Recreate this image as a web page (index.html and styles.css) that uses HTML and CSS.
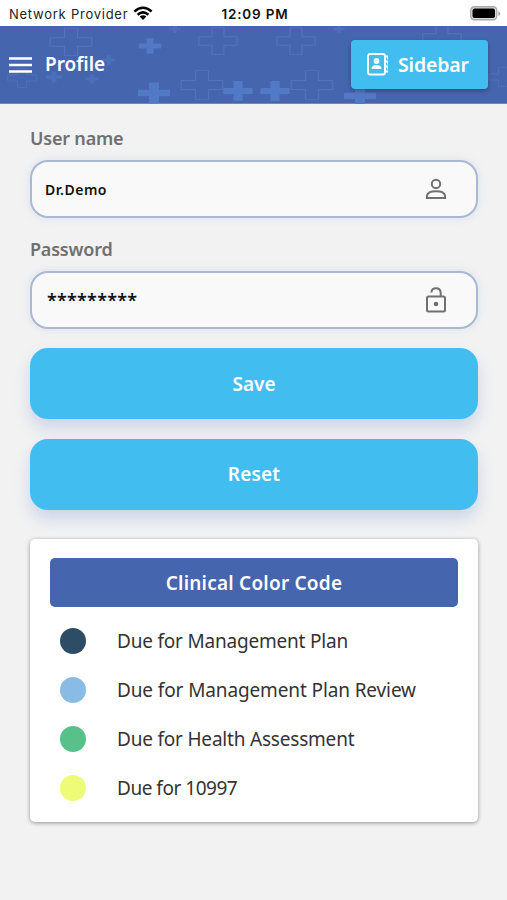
FILE: index.html
```html
<!DOCTYPE html>
<html lang="en">
<head>
<meta charset="utf-8">
<title>Profile</title>
<link rel="stylesheet" href="styles.css">
</head>
<body>
<div class="status">
  <span class="carrier"><span class="carrier-name">Network Provider</span>
    <svg width="20" height="15" viewBox="0 0 20 15" fill="none" stroke="#000" stroke-width="2.5"><path d="M1.4 5.5Q10-1.9 18.600 5.500M4.600 8.700Q10 4 15.400 8.700"/><path d="M6.700 10.500Q10 8 13.300 10.500L10 14Z" fill="#000" stroke="none"/></svg>
  </span>
  <span class="time">12:09 PM</span>
  <svg class="battery" width="31" height="15" viewBox="0 0 31 15"><rect x=".75" y=".75" width="26" height="13" rx="3.500" fill="#ddd" stroke="#aaa" stroke-width="1.300"/><rect x="2.500" y="2.500" width="22.500" height="9.500" rx="2" fill="#000"/><path d="M28.300 5v5q2-1 2-2.500t-2-2.500z" fill="#aaa"/></svg>
</div>
<header class="header">
  <svg class="pattern" width="507" height="78" viewBox="0 0 507 78">
    <defs>
      <path id="plus" d="M-5-16H5V-5H16V5H5V16H-5V5H-16V-5H-5Z"/>
    </defs>
    <g fill="none" stroke="#5373ba" stroke-width="1">
      <use href="#plus" transform="translate(71 16) scale(1.300 .85)"/>
      <use href="#plus" transform="translate(218 15) scale(1.200 .85)"/>
      <use href="#plus" transform="translate(202 59) scale(1.300 .9)"/>
      <use href="#plus" transform="translate(296 15) scale(1.200 .85)"/>
      <use href="#plus" transform="translate(312 59) scale(1.300 .9)"/>
      <use href="#plus" transform="translate(22 52) scale(.9 .6)"/>
      <use href="#plus" transform="translate(442 12) scale(1.200 .85)"/>
      <use href="#plus" transform="translate(503 51) scale(.9 .6)"/>
    </g>
    <g fill="#5179c5">
      <use href="#plus" transform="translate(150 20) scale(.7 .48)"/>
      <use href="#plus" transform="translate(154 67) scale(1 .66)"/>
      <use href="#plus" transform="translate(238 65) scale(.92 .62)"/>
      <use href="#plus" transform="translate(275 65) scale(.92 .62)"/>
      <use href="#plus" transform="translate(360 70) scale(1 .66)"/>
    </g>
    <g fill="#4b70bb">
      <use href="#plus" transform="translate(54 51) scale(.5 .35)"/>
      <use href="#plus" transform="translate(92 53) scale(.4 .28)"/>
      <use href="#plus" transform="translate(109 34) scale(.4 .3)"/>
      <use href="#plus" transform="translate(175 3) scale(.35 .25)"/>
      <use href="#plus" transform="translate(339 3) scale(.35 .25)"/>
    </g>
  </svg>
  <svg class="burger" width="23" height="16" viewBox="0 0 23 16" stroke="#fff" stroke-width="2.400"><path d="M0 1.500H23M0 8H23M0 14.500H23"/></svg>
  <h1 class="title">Profile</h1>
  <button class="sidebar-btn">
    <svg width="22" height="23" viewBox="0 0 22 23" fill="none" stroke="#fff" stroke-width="1.900"><rect x="1" y="1" width="17" height="20.500" rx="2"/><path d="M18 3.500H21M18 8.500H21M18 13.500H21M18 18.500H21"/><path d="M20.500 3.500V19" stroke-width="1" stroke-dasharray="3 2"/><circle cx="9.500" cy="8" r="2.900" fill="#fff" stroke="none"/><path d="M4.500 16q0-4 5-4t5 4z" fill="#fff" stroke="none"/></svg>
    <span class="sidebar-text">Sidebar</span>
  </button>
</header>
<main class="content">
  <label class="label">User name</label>
  <div class="field">
    <span class="value">Dr.Demo</span>
    <svg width="28" height="28" viewBox="0 0 28 28" fill="none" stroke="#707070" stroke-width="2"><circle cx="14" cy="8.900" r="4.200"/><path d="M5 22.900V20.500Q5.600 16.200 14 16.200T23 20.500V22.900Z"/></svg>
  </div>
  <label class="label">Password</label>
  <div class="field">
    <span class="value stars">*********</span>
    <svg width="28" height="28" viewBox="0 0 28 28" fill="none" stroke="#707070" stroke-width="2"><rect x="5" y="10.600" width="18" height="15" rx="1.500"/><path d="M9.300 6.500Q9.700 2.200 14 2.200Q18.700 2.200 18.700 7V10.500"/><circle cx="14" cy="18" r="2.300" fill="#707070" stroke="none"/></svg>
  </div>
  <button class="action">Save</button>
  <button class="action reset">Reset</button>
  <section class="card">
    <h2 class="card-title">Clinical Color Code</h2>
    <ul class="legend">
      <li><i class="dot navy"></i><span>Due for Management Plan</span></li>
      <li><i class="dot blue"></i><span class="review">Due for Management Plan Review</span></li>
      <li><i class="dot green"></i><span>Due for Health Assessment</span></li>
      <li><i class="dot yellow"></i><span class="item-code">Due for 10997</span></li>
    </ul>
  </section>
</main>
</body>
</html>
```
FILE: styles.css
```css
* { box-sizing: border-box; }
body { margin: 0; height: 900px; overflow: hidden; background: #f2f2f2; font-family: "Noto Sans", "Open Sans", sans-serif; }
svg { display: block; flex: none; }
button { border: 0; padding: 0; font-family: inherit; color: #fff; }
.status { height: 26px; background: #fff; display: grid; grid-template-columns: 1fr auto 1fr; align-items: center; padding: 1px 6px 0 9px; font-family: Inter, sans-serif; font-size: 13px; color: #222; }
.carrier { display: flex; align-items: center; gap: 5px; white-space: nowrap; }
.carrier-name { letter-spacing: .75px; }
.time { font-size: 13.5px; font-weight: 600; letter-spacing: .8px; color: #111; }
.battery { justify-self: end; }
.header { height: 78px; background: #4565ae; display: flex; align-items: center; position: relative; padding: 0 19px 0 9px; border-bottom: 1px solid #6e88c2; }
.pattern { position: absolute; left: 0; top: 0; }
.burger, .title, .sidebar-btn { position: relative; }
.title { margin: -2px 0 0 13px; color: #fff; font-size: 19px; line-height: 26px; font-weight: 600; }
.sidebar-btn { margin-left: auto; width: 137px; height: 49px; border-radius: 4px; background: #41beef; box-shadow: 0 2px 4px rgba(0,0,0,.28); display: flex; align-items: center; padding-left: 16px; gap: 9px; font-size: 19.5px; font-weight: 600; letter-spacing: -.15px; }
.content { padding: 21px 29px 0 30px; display: flex; flex-direction: column; }
.label { height: 26px; line-height: 26px; font-size: 18px; font-weight: 600; letter-spacing: -.2px; color: #707070; margin-bottom: 9px; }
.field { height: 58px; border: 2px solid #abb8d4; border-radius: 18px; background: #f9f9f9; box-shadow: 0 0 10px rgba(120,155,215,.2); display: flex; align-items: center; justify-content: space-between; padding: 0 26px 0 13px; margin-bottom: 18px; }
.value { font-size: 14px; font-weight: 600; letter-spacing: .5px; color: #111; }
.stars { font-size: 18px; letter-spacing: .2px; padding-left: 2px; }
.action { height: 71px; flex: none; border-radius: 18px; background: #41beef; box-shadow: 0 9px 16px rgba(80,120,200,.24); font-size: 19px; font-weight: 600; margin-top: 1px; }
.reset { margin-top: 19.5px; letter-spacing: .2px; }
.card { margin-top: 29.5px; height: 283px; background: #fff; border-radius: 5px; box-shadow: 0 1px 4px rgba(0,0,0,.4); padding: 19px 20px 0; }
.card-title { margin: 0; height: 49px; line-height: 50px; border-radius: 5px; background: #4565ae; color: #fff; text-align: center; font-size: 19px; font-weight: 600; letter-spacing: .22px; }
.legend { list-style: none; margin: 9px 0 0; padding: 0 0 0 10px; }
.legend li { height: 49px; display: flex; align-items: center; gap: 31px; font-size: 19px; letter-spacing: -.2px; color: #333; white-space: nowrap; }
.legend .review { letter-spacing: -.12px; }
.legend .item-code { letter-spacing: -.48px; }
.legend span { padding-top: 1px; }
.dot { width: 26px; height: 26px; border-radius: 50%; flex: none; }
.navy { background: #2d4d67; }
.blue { background: #89bbe4; }
.green { background: #58c18b; }
.yellow { background: #edfb77; }
```
